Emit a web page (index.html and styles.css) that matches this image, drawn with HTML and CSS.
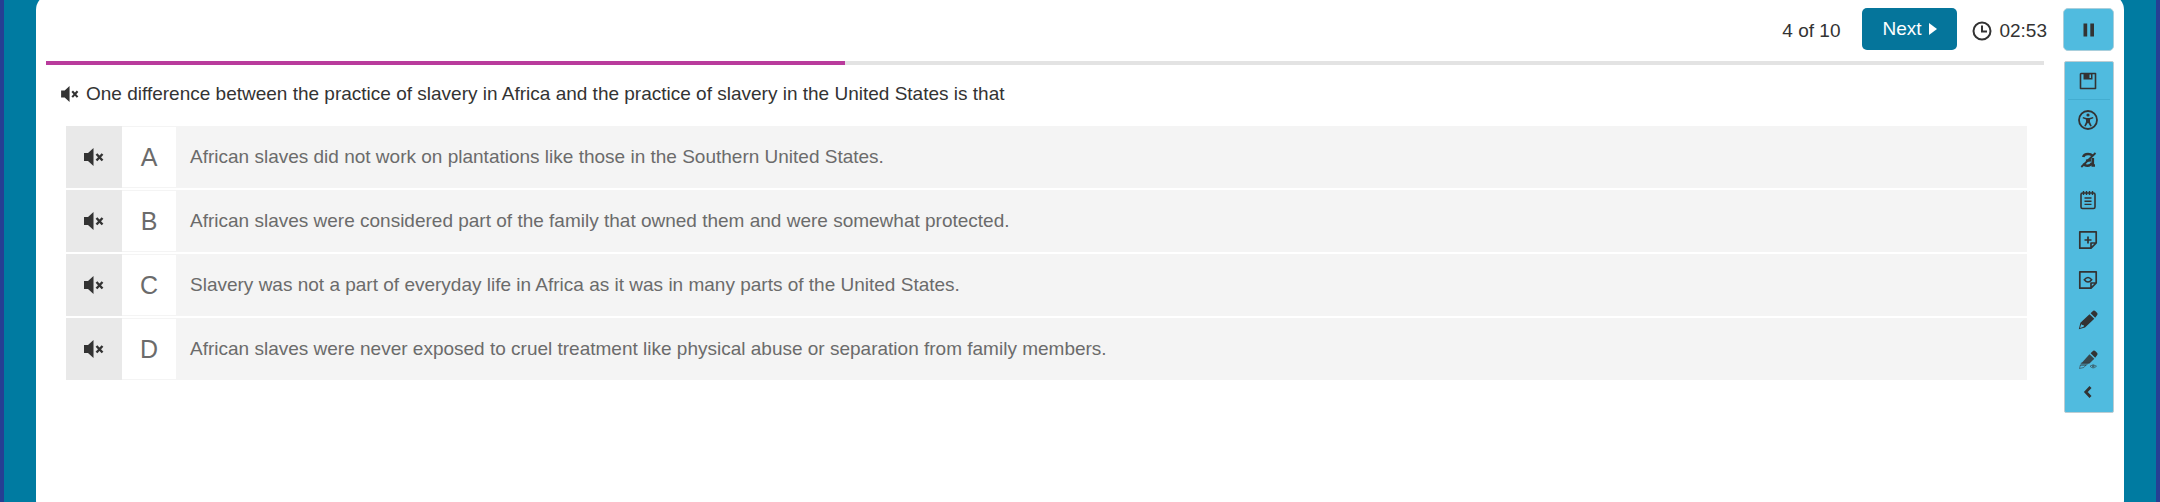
FILE: index.html
```
<!DOCTYPE html>
<html lang="en">
  <head>
    <meta charset="UTF-8" />
    <meta name="viewport" content="width=device-width, initial-scale=1.0" />
    <title>Practice Test</title>
    <link rel="stylesheet" href="styles.css">
  </head>
  <body>
    <!-- shared icon -->
    <svg class="sprite" aria-hidden="true">
      <symbol id="mute" viewBox="0 0 20 18">
        <path d="M0 5h4l5.500-5v18L4 13H0z" fill="currentColor" />
        <path d="M12.500 6l6 6.500M18.500 6l-6 6.500" stroke="currentColor" stroke-width="2.400" />
      </symbol>
    </svg>
    <div class="card">
      <header class="top-bar">
        <span class="count">4 of 10</span>
        <button type="button" class="next-btn">
          Next
          <svg class="next-arrow" viewBox="0 0 8 12"><path d="M0 0l8 6-8 6z" fill="currentColor" /></svg>
        </button>
        <div class="timer">
          <svg class="clock" viewBox="0 0 20 20" fill="none" stroke="currentColor" stroke-width="2">
            <circle cx="10" cy="10" r="8.500" />
            <path d="M10 4.500V10.500h5" />
          </svg>
          <span>02:53</span>
        </div>
        <button type="button" class="pause-btn" aria-label="Pause">
          <svg viewBox="0 0 20 20"><path d="M4.500 3.500h3.700v13H4.500zM11.300 3.500H15v13h-3.700z" fill="currentColor" /></svg>
        </button>
      </header>

      <div class="content">
        <main class="question">
          <progress class="progress" value="40" max="100" aria-label="Progress"></progress>
          <div class="prompt">
            <button type="button" class="read-btn" aria-label="Read question"><svg><use href="#mute" /></svg></button>
            <p>One difference between the practice of slavery in Africa and the practice of slavery in the United States is that</p>
          </div>
          <ul class="answers">
            <li class="answer">
              <button type="button" class="answer-read" aria-label="Read answer A"><svg><use href="#mute" /></svg></button>
              <button type="button" class="answer-btn">
                <span class="letter">A</span>
                <span class="text">African slaves did not work on plantations like those in the Southern United States.</span>
              </button>
            </li>
            <li class="answer">
              <button type="button" class="answer-read" aria-label="Read answer B"><svg><use href="#mute" /></svg></button>
              <button type="button" class="answer-btn">
                <span class="letter">B</span>
                <span class="text">African slaves were considered part of the family that owned them and were somewhat protected.</span>
              </button>
            </li>
            <li class="answer">
              <button type="button" class="answer-read" aria-label="Read answer C"><svg><use href="#mute" /></svg></button>
              <button type="button" class="answer-btn">
                <span class="letter">C</span>
                <span class="text">Slavery was not a part of everyday life in Africa as it was in many parts of the United States.</span>
              </button>
            </li>
            <li class="answer">
              <button type="button" class="answer-read" aria-label="Read answer D"><svg><use href="#mute" /></svg></button>
              <button type="button" class="answer-btn">
                <span class="letter">D</span>
                <span class="text">African slaves were never exposed to cruel treatment like physical abuse or separation from family members.</span>
              </button>
            </li>
          </ul>
        </main>

        <nav class="tools" aria-label="Tools">
          <button type="button" class="tool tool-save" aria-label="Save">
            <svg viewBox="0 0 20 20">
              <path d="M3 2.500h14.500v15h-15V3z" fill="none" stroke="currentColor" stroke-width="1.600" stroke-linejoin="round" />
              <path d="M5.500 2h9v6.500h-9z" fill="currentColor" />
              <path d="M11.500 3.500h1.500v3.500h-1.500z" fill="#50bbdf" />
            </svg>
          </button>
          <button type="button" class="tool" aria-label="Accessibility">
            <svg viewBox="0 0 20 20">
              <circle cx="10" cy="10" r="9" fill="none" stroke="currentColor" stroke-width="1.800" />
              <circle cx="10" cy="5" r="1.600" fill="currentColor" />
              <path d="M5 7l3.500 1h3L15 7l.4 1.300-3.400 1.200v2.500l1.800 4-1.400.6L10.300 13h-.6l-2.100 3.600-1.400-.6L8 12V9.500L4.600 8.300z" fill="currentColor" />
            </svg>
          </button>
          <button type="button" class="tool" aria-label="Contrast off">
            <svg viewBox="0 0 20 20" fill="none" stroke="currentColor">
              <path d="M5.200 7Q6 4 10 4q3 0 4.200 1.500" stroke-width="2.600" />
              <path d="M14.800 8v7.500h2.200M6 13.500q.5 2.300 3.500 2.300 3 0 4.500-2.800M8 10.800l5-.6" stroke-width="2.600" />
              <path d="M3.300 17L17.500 3" stroke-width="1.800" />
            </svg>
          </button>
          <button type="button" class="tool" aria-label="Notes">
            <svg viewBox="0 0 20 20" fill="none" stroke="currentColor" stroke-width="1.600">
              <rect x="3" y="3" width="14" height="15.500" rx="1.500" />
              <path d="M5.500 1v4M8.500 1v4M11.500 1v4M14.500 1v4M6.500 8h7M6.500 11.200h7M6.500 14.400h7" stroke-width="1.400" />
            </svg>
          </button>
          <button type="button" class="tool" aria-label="Add sticky note">
            <svg viewBox="0 0 20 20" fill="none" stroke="currentColor" stroke-width="1.700">
              <path d="M1.800 1.800h16.400V13L13 18.200H1.800zM13 18.200V13h5.200" stroke-linejoin="round" />
              <path d="M10 6.500v7M6.500 10h7" />
            </svg>
          </button>
          <button type="button" class="tool" aria-label="Show sticky notes">
            <svg viewBox="0 0 20 20" fill="none" stroke="currentColor" stroke-width="1.700">
              <path d="M1.800 1.800h16.400V13L13 18.200H1.800zM13 18.200V13h5.200" stroke-linejoin="round" />
              <path d="M6.300 9.700q3.700-4.600 7.400 0-3.700 4.600-7.400 0z" stroke-width="1.500" />
            </svg>
          </button>
          <button type="button" class="tool" aria-label="Highlight">
            <svg viewBox="0 0 20 20" fill="currentColor">
              <path d="M11.500 4.200l4.800 4.600-9.300 8.800-6.200 1.600 1.600-6.400zM3.200 14.200L2 18l3.700-1.200.2-1.600-1.400-.2z" fill-rule="evenodd" />
              <path d="M12.600 3.200L15.200.8q1-.7 2 .2l2 2q.8 1 0 1.900l-2 2.900z" />
            </svg>
          </button>
          <button type="button" class="tool" aria-label="Hide highlights">
            <svg viewBox="0 0 20 20" fill="currentColor">
              <path d="M12.600 3.200L15.200.8q1-.7 2 .2l2 2q.8 1 0 1.900l-2 2.900z" />
              <path d="M11.500 4.200l4.800 4.600-4.800 4.700H3.200z" opacity=".85" />
              <path d="M3 12.500h8.800l-4 3.500H2z" opacity=".5" />
              <path d="M8 15l-2.200 2.500-4.300 1 .9-3.500M12 16.200q3-3 6.500 0-3.500 3.500-6.500 0z" fill="none" stroke="currentColor" opacity=".55" />
              <circle cx="15.200" cy="16.200" r="1.200" opacity=".6" />
            </svg>
          </button>
          <button type="button" class="tool tool-collapse" aria-label="Collapse tools">
            <svg viewBox="0 0 20 20"><path d="M12.500 5L7.800 10l4.700 5" fill="none" stroke="currentColor" stroke-width="2.800" /></svg>
          </button>
        </nav>
      </div>
    </div>
  </body>
</html>
```

FILE: styles.css
```
* {
  box-sizing: border-box;
}
html {
  height: 100%;
  overflow: hidden;
}
body {
  height: 100%;
  margin: 0;
  padding: 0 32px;
  border: solid #263f93;
  border-width: 0 4px;
  background-color: #007ba1;
  color: #333;
  font-family: "Liberation Sans", Arial, sans-serif;
  font-size: 19px;
  line-height: 24px;
}
button {
  padding: 0;
  border: none;
  background: none;
  color: inherit;
  font: inherit;
  cursor: pointer;
}
svg {
  display: block;
}
.sprite {
  display: none;
}
.card {
  min-height: calc(100% + 20px);
  margin-top: -6px;
  padding: 14px 10px 0;
  border-radius: 16px;
  background-color: #fff;
}

/* top bar */
.top-bar {
  display: flex;
  justify-content: flex-end;
  align-items: flex-start;
  height: 44px;
}
.count,
.timer {
  padding-top: 11px;
}
.next-btn {
  display: flex;
  justify-content: center;
  align-items: center;
  gap: 8px;
  width: 95px;
  height: 42px;
  margin: 0 15px 0 22px;
  border-radius: 5px;
  background-color: #05759b;
  color: #fff;
}
.next-arrow {
  width: 8px;
  height: 12px;
}
.timer {
  display: flex;
  align-items: center;
  gap: 7px;
  margin-right: 16px;
}
.clock {
  width: 20px;
  height: 20px;
}
.pause-btn {
  display: flex;
  justify-content: center;
  align-items: center;
  width: 51px;
  height: 43px;
  border: 1px solid #a9cfdc;
  border-radius: 5px;
  background-color: #50bbdf;
}
.pause-btn svg {
  width: 20px;
  height: 20px;
}

/* question */
.content {
  display: flex;
  align-items: flex-start;
  gap: 20px;
  padding-top: 9px;
}
.question {
  flex: 1;
}
.progress {
  display: block;
  width: 100%;
  height: 4px;
  border: none;
  appearance: none;
  background-color: #e3e3e3;
}
.progress::-webkit-progress-bar {
  background-color: #e3e3e3;
}
.progress::-webkit-progress-value {
  background-color: #b93b9c;
}
.prompt {
  display: flex;
  align-items: center;
  gap: 7px;
  padding: 17px 15px 0;
}
.prompt p {
  margin: 0;
}
.read-btn svg {
  width: 18px;
  height: 16px;
}
.answers {
  display: flex;
  flex-direction: column;
  gap: 2px;
  margin: 0;
  padding: 20px 17px 0 20px;
  list-style: none;
}
.answer {
  display: flex;
  min-height: 62px;
  background-color: #f4f4f4;
}
.answer-read {
  display: flex;
  justify-content: center;
  align-items: center;
  width: 56px;
  background-color: #e9e9e9;
}
.answer-read svg {
  width: 20px;
  height: 18px;
}
.answer-btn {
  display: flex;
  flex: 1;
  align-items: center;
  padding: 1px 0;
  color: #6b6b6b;
  text-align: left;
}
.letter {
  display: flex;
  justify-content: center;
  align-items: center;
  align-self: stretch;
  width: 54px;
  background-color: #fff;
  font-size: 25px;
}
.text {
  padding-left: 14px;
}

/* tools */
.tools {
  display: flex;
  flex-direction: column;
  width: 50px;
  border: 1px solid #bccdd3;
  border-radius: 2px;
  background-color: #50bbdf;
}
.tool {
  display: flex;
  justify-content: center;
  align-items: center;
  height: 40px;
  padding-right: 3px;
}
.tool svg {
  width: 20px;
  height: 20px;
}
.tool-save {
  height: 38px;
  margin: 0 3px;
  border-bottom: 1px solid #43add1;
}
.tool-collapse {
  align-items: flex-start;
  height: 32px;
  padding-top: 2px;
}
```
